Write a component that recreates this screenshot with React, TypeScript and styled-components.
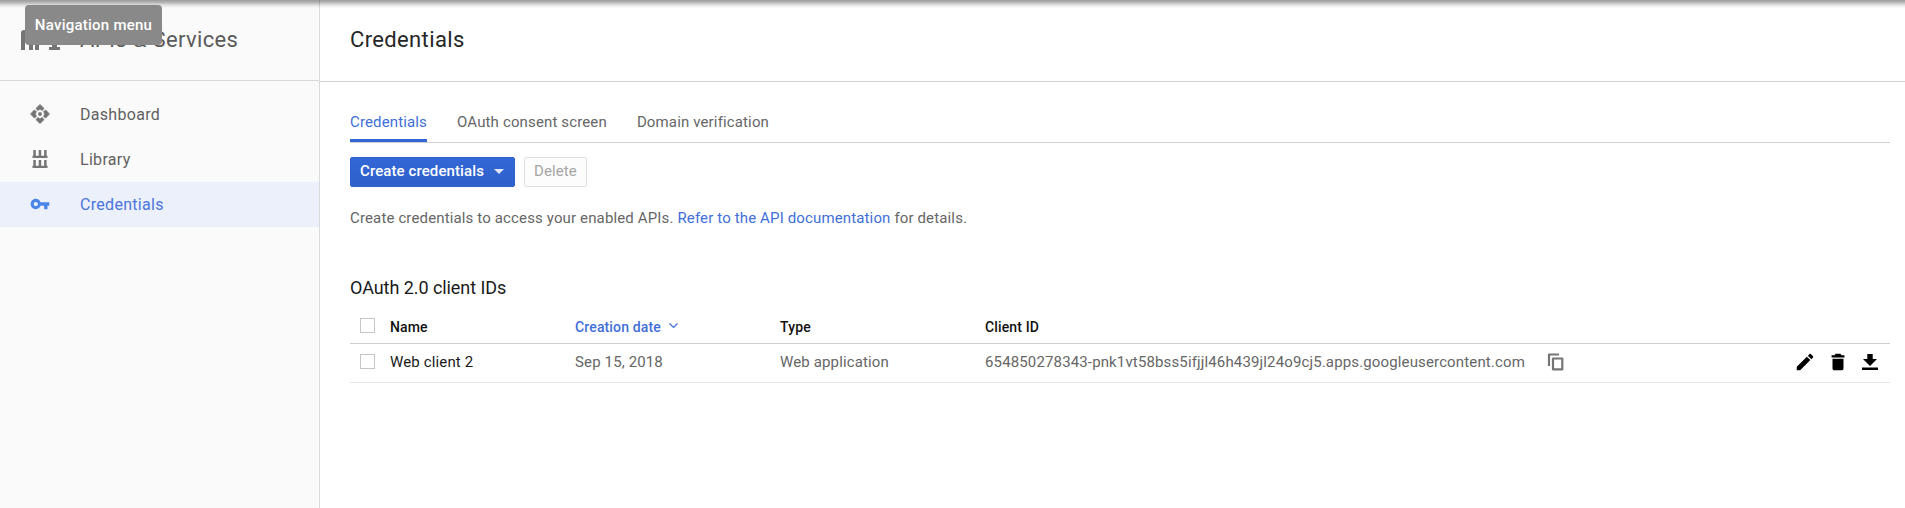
import React from "react";
import styled, { createGlobalStyle, css } from "styled-components";

const Global = createGlobalStyle`
  * { box-sizing: border-box; }
  body { margin: 0; font-family: Roboto, "Liberation Sans", sans-serif; font-size: 15px; letter-spacing: 0.14px; color: #666; background: #fff; overflow: hidden; }
`;

const Page = styled.div`
  position: relative;
  display: flex;
  height: 508px;
`;
const TopShadow = styled.div`
  position: absolute;
  inset: 0 0 auto 0;
  height: 8px;
  background: linear-gradient(rgba(0, 0, 0, 0.38), rgba(0, 0, 0, 0.3) 25%, rgba(0, 0, 0, 0.1) 65%, transparent);
`;
const Tooltip = styled.div`
  position: absolute;
  left: 25px;
  top: 5px;
  width: 137px;
  height: 40px;
  border-radius: 4px;
  background: #898989;
  color: #fff;
  font-weight: 500;
  font-size: 15px;
  letter-spacing: 0.24px;
  line-height: 40px;
  text-align: center;
  white-space: nowrap;
`;
const Sidebar = styled.aside`
  width: 320px;
  flex: none;
  background: #fafafa;
  border-right: 1px solid #dadada;
`;
const Product = styled.div`
  display: flex;
  align-items: center;
  height: 81px;
  padding: 0 0 1px 21px;
  gap: 20px;
  border-bottom: 1px solid #d9d9d9;
  font-size: 22px;
  letter-spacing: 0.34px;
  color: #5a5a5a;
  svg { margin-top: 1px; }
`;
const Menu = styled.nav`
  padding-top: 11px;
`;
const MenuItem = styled.a<{ $active?: boolean }>`
  display: flex;
  align-items: center;
  height: 45px;
  padding-left: 30px;
  gap: 30px;
  font-size: 16px;
  letter-spacing: 0.3px;
  color: ${(p) => (p.$active ? "#4a75dc" : "#616161")};
  background: ${(p) => (p.$active ? "#ebf0fa" : "transparent")};
  svg { margin-top: -1px; color: ${(p) => (p.$active ? "#4a86e8" : "#757575")}; }
`;
const Main = styled.main`
  flex: 1;
`;
const Header = styled.header`
  height: 82px;
  padding: 0 0 2px 30px;
  display: flex;
  align-items: center;
  border-bottom: 1px solid #d0d0d0;
`;
const Title = styled.h1`
  margin: 0;
  font-size: 22px;
  letter-spacing: 0.36px;
  font-weight: 400;
  color: #262626;
`;
const Content = styled.div`
  padding: 18px 15px 0 30px;
`;
const Tabs = styled.div`
  display: flex;
  gap: 30px;
  height: 43px;
  border-bottom: 1px solid #d0d0d0;
`;
const Tab = styled.a<{ $active?: boolean }>`
  height: 42px;
  line-height: 44px;
  color: ${(p) => (p.$active ? "#3f6fd9" : "#666")};
  ${(p) => p.$active && css`box-shadow: inset 0 -3px #3367d6;`}
`;
const Toolbar = styled.div`
  display: flex;
  gap: 9px;
  padding-top: 14px;
`;
const Button = styled.button<{ $primary?: boolean }>`
  display: flex;
  align-items: center;
  gap: 10px;
  height: 30px;
  width: ${(p) => (p.$primary ? 165 : 63)}px;
  padding: 0 9px 2px;
  border-radius: 2px;
  border: 1px solid ${(p) => (p.$primary ? "#3062cc" : "#dfdfdf")};
  background: ${(p) => (p.$primary ? "linear-gradient(#3367d6, #2e60ca)" : "#fcfcfc")};
  color: ${(p) => (p.$primary ? "#fff" : "#a5a5a5")};
  font: ${(p) => (p.$primary ? 500 : 400)} 15px Roboto, sans-serif;
  letter-spacing: 0.1px;
  white-space: nowrap;
`;
const Intro = styled.p`
  margin: 21px 0 0;
  line-height: 20px;
`;
const Link = styled.a`
  color: #3f6fd9;
`;
const SectionTitle = styled.h2`
  margin: 48px 0 0;
  line-height: 24px;
  font-size: 18px;
  letter-spacing: -0.06px;
  font-weight: 400;
  color: #1a1a1a;
`;
const Row = styled.div<{ $head?: boolean }>`
  display: grid;
  grid-template-columns: 40px 185px 205px 205px 562px 1fr auto;
  align-items: center;
  height: ${(p) => (p.$head ? 44 : 39)}px;
  padding: ${(p) => (p.$head ? "9px 9px 0 0" : "0 9px 2px 0")};
  border-bottom: 1px solid ${(p) => (p.$head ? "#cfcfcf" : "#e6e6e6")};
  ${(p) => p.$head && css`color: #111; font-weight: 500; font-size: 14px;`}
`;
const HeadCell = styled.span`
  padding-top: 2px;
`;
const Checkbox = styled.span`
  width: 15px;
  height: 15px;
  margin: -1px 0 0 10px;
  border: 1px solid #c6c6c6;
`;
const Sorted = styled(HeadCell)`
  display: flex;
  align-items: center;
  gap: 8px;
  color: #3f6fd9;
  svg { margin-top: -2px; }
`;
const Name = styled.span`
  color: #1a1a1a;
`;
const Actions = styled.span`
  display: flex;
  gap: 10.5px;
  grid-column: 7;
  color: #000;
`;

const Icon = ({ d, size = 22 }: { d: string; size?: number }) => (
  <svg width={size} height={size} viewBox="0 0 24 24" fill="currentColor"><path d={d} /></svg>
);

export default function App() {
  return (
    <Page>
      <Global />
      <Sidebar>
        <Product>
          <svg width="39" height="20" viewBox="0 0 39 20" fill="#757575">
            <path d="M0 20V3Q0 0 3 0H9Q12 0 12 3V20H8V12H4V20ZM14 20V0H21Q25 0 25 4V8Q25 12 21 12H18V20ZM28 0H39V3H36V17H39V20H28V17H31V3H28Z" />
          </svg>
          <span>APIs &amp; Services</span>
        </Product>
        <Menu>
          <MenuItem>
            <svg width="20" height="20" viewBox="0 0 20 20" fill="currentColor" stroke="currentColor" strokeWidth="0.7" strokeLinejoin="round">
              <path d="M10 .5l4 3.8-1.6 2.2L10 5.3 7.6 6.5 6 4.3zM19.5 10l-3.8 4-2.200-1.600L14.700 10l-1.200-2.400L15.700 6zM10 19.500l-4-3.800 1.600-2.200 2.400 1.200 2.400-1.200L14 15.700zM.5 10l3.800-4 2.200 1.600L5.300 10l1.200 2.400L4.300 14z" />
              <circle cx="10" cy="10" r="1.6" />
            </svg>
            Dashboard
          </MenuItem>
          <MenuItem>
            <svg width="20" height="20" viewBox="0 0 20 20" fill="currentColor">
              <path d="M3.300 1h2.500v5.800h2.900V1h2.500v5.800h2.900V1h2.500v5.800H17.500V9H2.500V6.800h.8zM3.300 11h2.500v5.800h2.900V11h2.500v5.800h2.900V11h2.500v5.800H17.500V19H2.500V16.800h.8z" />
            </svg>
            Library
          </MenuItem>
          <MenuItem $active>
            <Icon size={20} d="M12.65 9.8C11.83 7.4 9.61 5.8 7 5.8c-3.42 0-6.2 2.78-6.2 6.2s2.78 6.2 6.2 6.2c2.61 0 4.83-1.6 5.65-4H17v4h4v-4h2.2V9.8H12.65zM7 14.5c-1.38 0-2.5-1.12-2.5-2.5s1.12-2.5 2.5-2.5 2.5 1.12 2.5 2.5-1.12 2.5-2.5 2.5z" />
            Credentials
          </MenuItem>
        </Menu>
      </Sidebar>
      <Main>
        <Header><Title>Credentials</Title></Header>
        <Content>
          <Tabs>
            <Tab $active>Credentials</Tab>
            <Tab>OAuth consent screen</Tab>
            <Tab>Domain verification</Tab>
          </Tabs>
          <Toolbar>
            <Button $primary>
              Create credentials
              <svg width="10" height="5" viewBox="0 0 10 5" fill="#dfe7f8"><path d="M0 0h10L5 5z" /></svg>
            </Button>
            <Button disabled>Delete</Button>
          </Toolbar>
          <Intro>
            Create credentials to access your enabled APIs. <Link>Refer to the API documentation</Link> for details.
          </Intro>
          <SectionTitle>OAuth 2.0 client IDs</SectionTitle>
          <Row $head>
            <Checkbox />
            <HeadCell>Name</HeadCell>
            <Sorted>
              Creation date
              <svg width="9" height="6" viewBox="0 0 9 6" fill="none" stroke="currentColor" strokeWidth="1.2"><path d="M.5.5l4 4 4-4" /></svg>
            </Sorted>
            <HeadCell>Type</HeadCell>
            <HeadCell>Client ID</HeadCell>
          </Row>
          <Row>
            <Checkbox />
            <Name>Web client 2</Name>
            <span>Sep 15, 2018</span>
            <span>Web application</span>
            <span>654850278343-pnk1vt58bss5ifjjl46h439jl24o9cj5.apps.googleusercontent.com</span>
            <svg width="17" height="18" viewBox="0 0 17 18" fill="none" stroke="#757575" strokeWidth="2.2" strokeLinejoin="round">
              <path d="M2 13V1.500h10M6 5.500h9.300v10.800H6z" />
            </svg>
            <Actions>
              <Icon d="M3 17.25V21h3.75L17.81 9.94l-3.75-3.75L3 17.25zM20.71 7.04c.39-.39.39-1.02 0-1.41l-2.34-2.34c-.39-.39-1.02-.39-1.41 0l-1.83 1.83 3.75 3.75 1.83-1.83z" />
              <Icon d="M6 19c0 1.1.9 2 2 2h8c1.1 0 2-.9 2-2V8.5H6v10.5zM19 4.5h-3l-1.5-1.5h-5L8 4.5H5v2.500h14V4.5z" />
              <svg width="22" height="22" viewBox="0 0 22 22" fill="currentColor">
                <path d="M8.3 3h5.400v5H18l-7 7-7-7h4.300zM3 16.500h16V19H3z" />
              </svg>
            </Actions>
          </Row>
        </Content>
      </Main>
      <TopShadow />
      <Tooltip>Navigation menu</Tooltip>
    </Page>
  );
}
